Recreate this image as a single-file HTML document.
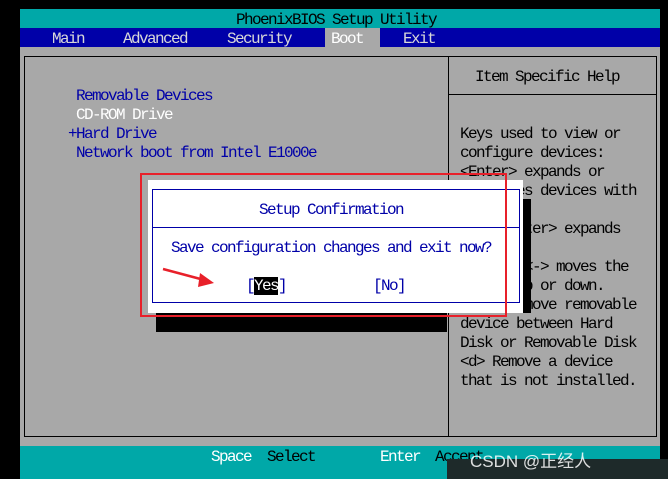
<!DOCTYPE html><html><head><style>
body{margin:0;width:668px;height:479px;background:#000;position:relative;overflow:hidden;font-family:"Liberation Mono",monospace;font-size:16px;letter-spacing:-1.6px;}
div{position:absolute;}
.t{line-height:19px;white-space:pre;}
</style></head><body>
<div style="left:20px;top:9px;width:640px;height:470px;background:#a8a8a8"></div>
<div style="left:20px;top:9px;width:640px;height:19px;background:#00a8a8"></div>
<div class="t" style="left:236px;top:11px;color:#000">PhoenixBIOS Setup Utility</div>
<div style="left:20px;top:28px;width:640px;height:19px;background:#0000a8"></div>
<div style="left:325px;top:28px;width:55px;height:19px;background:#a8a8a8"></div>
<div class="t" style="left:52px;top:30px;color:#d8d8d8">Main</div>
<div class="t" style="left:123px;top:30px;color:#d8d8d8">Advanced</div>
<div class="t" style="left:227px;top:30px;color:#d8d8d8">Security</div>
<div class="t" style="left:331px;top:30px;color:#fff">Boot</div>
<div class="t" style="left:403px;top:30px;color:#d8d8d8">Exit</div>
<div style="left:24px;top:56px;width:631px;height:379px;border:1px solid #000"></div>
<div style="left:448px;top:56px;width:1px;height:380px;background:#000"></div>
<div style="left:448px;top:94px;width:208px;height:1px;background:#000"></div>
<div class="t" style="left:475px;top:68px;color:#000">Item Specific Help</div>
<div class="t" style="left:68px;top:87px;color:#0000a8"> Removable Devices
 <span style="color:#fff">CD-ROM Drive</span>
+Hard Drive
 Network boot from Intel E1000e</div>
<div class="t" style="left:460px;top:125px;color:#000">Keys used to view or
configure devices:
&lt;Enter&gt; expands or
collapses devices with
a + or -
&lt;Ctrl+Enter&gt; expands
all
&lt;+&gt; and &lt;-&gt; moves the
device up or down.
&lt;n&gt; May move removable
device between Hard
Disk or Removable Disk
&lt;d&gt; Remove a device
that is not installed.</div>
<div style="left:156px;top:313px;width:291px;height:19px;background:#000"></div>
<div style="left:523px;top:199px;width:8px;height:114px;background:#000"></div>
<div style="left:148px;top:180px;width:375px;height:133px;background:#fff"></div>
<div style="left:152px;top:189px;width:366px;height:112px;border:1px solid #0000a8"></div>
<div style="left:152px;top:227px;width:368px;height:1px;background:#0000a8"></div>
<div class="t" style="left:259px;top:201px;color:#0000a8">Setup Confirmation</div>
<div class="t" style="left:171px;top:239px;color:#0000a8">Save configuration changes and exit now?</div>
<div class="t" style="left:246px;top:277px;color:#0000a8">[<span style="background:#000;color:#fff">Yes</span>]</div>
<div class="t" style="left:373px;top:277px;color:#0000a8">[No]</div>
<div style="left:140px;top:173px;width:363px;height:140px;border:2px solid #e8202a"></div>
<svg style="position:absolute;left:160px;top:265px" width="60" height="25"><line x1="3" y1="4" x2="48" y2="16" stroke="#e8202a" stroke-width="2.5"/><polygon points="54,18 40,8 38,22" fill="#e8202a"/></svg>
<div style="left:20px;top:446px;width:640px;height:33px;background:#00a8a8"></div>
<div class="t" style="left:211px;top:448px;color:#fff">Space</div>
<div class="t" style="left:267px;top:448px;color:#000">Select</div>
<div class="t" style="left:380px;top:448px;color:#fff">Enter</div>
<div class="t" style="left:435px;top:448px;color:#000">Accept</div>
<div style="left:447px;top:459px;width:221px;height:20px;background:#1e2a2a"></div>
<div style="left:470px;top:447px;font-family:'Liberation Sans','Noto Sans CJK SC',sans-serif;font-size:17px;letter-spacing:0;color:rgba(255,255,255,0.85)">CSDN @正经人</div>
</body></html>
